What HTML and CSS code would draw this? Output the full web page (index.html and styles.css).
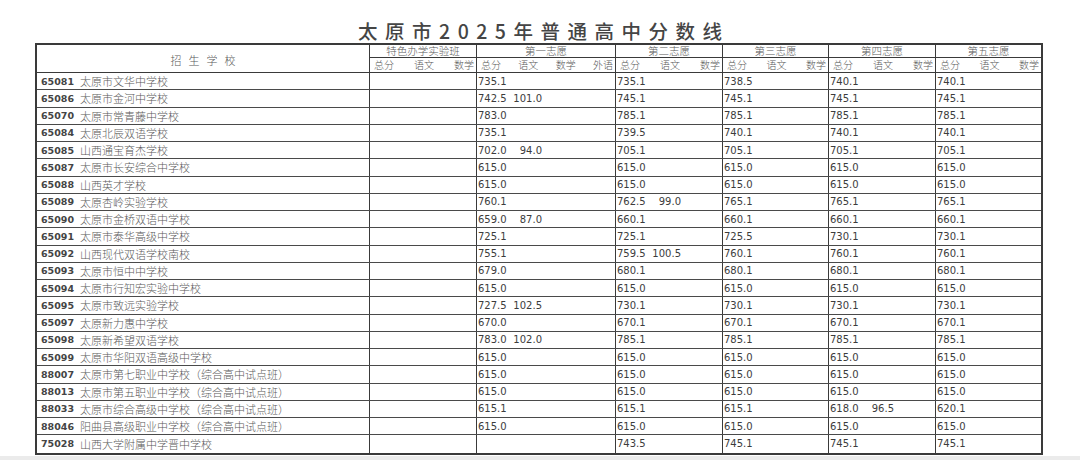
FILE: index.html
```html
<!DOCTYPE html>
<html lang="zh-CN">
<head>
<meta charset="utf-8">
<title>太原市2025年普通高中分数线</title>
<link rel="stylesheet" href="styles.css">
</head>
<body>
<div class="page">
  <h1 class="title">太原市2025年普通高中分数线</h1>
  <div class="sheet">
    <div class="head">
      <div class="hc hschool">招生学校</div>
      <div class="hc hgroup"><div class="gname">特色办学实验班</div><div class="subs"><span>总分</span><span>语文</span><span>数学</span></div></div>
      <div class="hc hgroup"><div class="gname">第一志愿</div><div class="subs"><span>总分</span><span>语文</span><span>数学</span><span>外语</span></div></div>
      <div class="hc hgroup"><div class="gname">第二志愿</div><div class="subs"><span>总分</span><span>语文</span><span>数学</span></div></div>
      <div class="hc hgroup"><div class="gname">第三志愿</div><div class="subs"><span>总分</span><span>语文</span><span>数学</span></div></div>
      <div class="hc hgroup"><div class="gname">第四志愿</div><div class="subs"><span>总分</span><span>语文</span><span>数学</span></div></div>
      <div class="hc hgroup last"><div class="gname">第五志愿</div><div class="subs"><span>总分</span><span>语文</span><span>数学</span></div></div>
    </div>
    <div class="body" id="rows">
      <div class="row"><div class="c school"><span class="code">65081</span><span class="name">太原市文华中学校</span></div><div class="c"></div><div class="c"><span class="v1">735.1</span></div><div class="c"><span class="v1">735.1</span></div><div class="c"><span class="v1">738.5</span></div><div class="c"><span class="v1">740.1</span></div><div class="c"><span class="v1">740.1</span></div></div>
      <div class="row"><div class="c school"><span class="code">65086</span><span class="name">太原市金河中学校</span></div><div class="c"></div><div class="c"><span class="v1">742.5</span><span class="v2">101.0</span></div><div class="c"><span class="v1">745.1</span></div><div class="c"><span class="v1">745.1</span></div><div class="c"><span class="v1">745.1</span></div><div class="c"><span class="v1">745.1</span></div></div>
      <div class="row"><div class="c school"><span class="code">65070</span><span class="name">太原市常青藤中学校</span></div><div class="c"></div><div class="c"><span class="v1">783.0</span></div><div class="c"><span class="v1">785.1</span></div><div class="c"><span class="v1">785.1</span></div><div class="c"><span class="v1">785.1</span></div><div class="c"><span class="v1">785.1</span></div></div>
      <div class="row"><div class="c school"><span class="code">65084</span><span class="name">太原北辰双语学校</span></div><div class="c"></div><div class="c"><span class="v1">735.1</span></div><div class="c"><span class="v1">739.5</span></div><div class="c"><span class="v1">740.1</span></div><div class="c"><span class="v1">740.1</span></div><div class="c"><span class="v1">740.1</span></div></div>
      <div class="row"><div class="c school"><span class="code">65085</span><span class="name">山西通宝育杰学校</span></div><div class="c"></div><div class="c"><span class="v1">702.0</span><span class="v2">94.0</span></div><div class="c"><span class="v1">705.1</span></div><div class="c"><span class="v1">705.1</span></div><div class="c"><span class="v1">705.1</span></div><div class="c"><span class="v1">705.1</span></div></div>
      <div class="row"><div class="c school"><span class="code">65087</span><span class="name">太原市长安综合中学校</span></div><div class="c"></div><div class="c"><span class="v1">615.0</span></div><div class="c"><span class="v1">615.0</span></div><div class="c"><span class="v1">615.0</span></div><div class="c"><span class="v1">615.0</span></div><div class="c"><span class="v1">615.0</span></div></div>
      <div class="row"><div class="c school"><span class="code">65088</span><span class="name">山西英才学校</span></div><div class="c"></div><div class="c"><span class="v1">615.0</span></div><div class="c"><span class="v1">615.0</span></div><div class="c"><span class="v1">615.0</span></div><div class="c"><span class="v1">615.0</span></div><div class="c"><span class="v1">615.0</span></div></div>
      <div class="row"><div class="c school"><span class="code">65089</span><span class="name">太原杏岭实验学校</span></div><div class="c"></div><div class="c"><span class="v1">760.1</span></div><div class="c"><span class="v1">762.5</span><span class="v2">99.0</span></div><div class="c"><span class="v1">765.1</span></div><div class="c"><span class="v1">765.1</span></div><div class="c"><span class="v1">765.1</span></div></div>
      <div class="row"><div class="c school"><span class="code">65090</span><span class="name">太原市金桥双语中学校</span></div><div class="c"></div><div class="c"><span class="v1">659.0</span><span class="v2">87.0</span></div><div class="c"><span class="v1">660.1</span></div><div class="c"><span class="v1">660.1</span></div><div class="c"><span class="v1">660.1</span></div><div class="c"><span class="v1">660.1</span></div></div>
      <div class="row"><div class="c school"><span class="code">65091</span><span class="name">太原市泰华高级中学校</span></div><div class="c"></div><div class="c"><span class="v1">725.1</span></div><div class="c"><span class="v1">725.1</span></div><div class="c"><span class="v1">725.5</span></div><div class="c"><span class="v1">730.1</span></div><div class="c"><span class="v1">730.1</span></div></div>
      <div class="row"><div class="c school"><span class="code">65092</span><span class="name">山西现代双语学校南校</span></div><div class="c"></div><div class="c"><span class="v1">755.1</span></div><div class="c"><span class="v1">759.5</span><span class="v2">100.5</span></div><div class="c"><span class="v1">760.1</span></div><div class="c"><span class="v1">760.1</span></div><div class="c"><span class="v1">760.1</span></div></div>
      <div class="row"><div class="c school"><span class="code">65093</span><span class="name">太原市恒中中学校</span></div><div class="c"></div><div class="c"><span class="v1">679.0</span></div><div class="c"><span class="v1">680.1</span></div><div class="c"><span class="v1">680.1</span></div><div class="c"><span class="v1">680.1</span></div><div class="c"><span class="v1">680.1</span></div></div>
      <div class="row"><div class="c school"><span class="code">65094</span><span class="name">太原市行知宏实验中学校</span></div><div class="c"></div><div class="c"><span class="v1">615.0</span></div><div class="c"><span class="v1">615.0</span></div><div class="c"><span class="v1">615.0</span></div><div class="c"><span class="v1">615.0</span></div><div class="c"><span class="v1">615.0</span></div></div>
      <div class="row"><div class="c school"><span class="code">65095</span><span class="name">太原市致远实验学校</span></div><div class="c"></div><div class="c"><span class="v1">727.5</span><span class="v2">102.5</span></div><div class="c"><span class="v1">730.1</span></div><div class="c"><span class="v1">730.1</span></div><div class="c"><span class="v1">730.1</span></div><div class="c"><span class="v1">730.1</span></div></div>
      <div class="row"><div class="c school"><span class="code">65097</span><span class="name">太原新力惠中学校</span></div><div class="c"></div><div class="c"><span class="v1">670.0</span></div><div class="c"><span class="v1">670.1</span></div><div class="c"><span class="v1">670.1</span></div><div class="c"><span class="v1">670.1</span></div><div class="c"><span class="v1">670.1</span></div></div>
      <div class="row"><div class="c school"><span class="code">65098</span><span class="name">太原新希望双语学校</span></div><div class="c"></div><div class="c"><span class="v1">783.0</span><span class="v2">102.0</span></div><div class="c"><span class="v1">785.1</span></div><div class="c"><span class="v1">785.1</span></div><div class="c"><span class="v1">785.1</span></div><div class="c"><span class="v1">785.1</span></div></div>
      <div class="row"><div class="c school"><span class="code">65099</span><span class="name">太原市华阳双语高级中学校</span></div><div class="c"></div><div class="c"><span class="v1">615.0</span></div><div class="c"><span class="v1">615.0</span></div><div class="c"><span class="v1">615.0</span></div><div class="c"><span class="v1">615.0</span></div><div class="c"><span class="v1">615.0</span></div></div>
      <div class="row"><div class="c school"><span class="code">88007</span><span class="name">太原市第七职业中学校（综合高中试点班）</span></div><div class="c"></div><div class="c"><span class="v1">615.0</span></div><div class="c"><span class="v1">615.0</span></div><div class="c"><span class="v1">615.0</span></div><div class="c"><span class="v1">615.0</span></div><div class="c"><span class="v1">615.0</span></div></div>
      <div class="row"><div class="c school"><span class="code">88013</span><span class="name">太原市第五职业中学校（综合高中试点班）</span></div><div class="c"></div><div class="c"><span class="v1">615.0</span></div><div class="c"><span class="v1">615.0</span></div><div class="c"><span class="v1">615.0</span></div><div class="c"><span class="v1">615.0</span></div><div class="c"><span class="v1">615.0</span></div></div>
      <div class="row"><div class="c school"><span class="code">88033</span><span class="name">太原市综合高级中学校（综合高中试点班）</span></div><div class="c"></div><div class="c"><span class="v1">615.1</span></div><div class="c"><span class="v1">615.1</span></div><div class="c"><span class="v1">615.1</span></div><div class="c"><span class="v1">618.0</span><span class="v2">96.5</span></div><div class="c"><span class="v1">620.1</span></div></div>
      <div class="row"><div class="c school"><span class="code">88046</span><span class="name">阳曲县高级职业中学校（综合高中试点班）</span></div><div class="c"></div><div class="c"><span class="v1">615.0</span></div><div class="c"><span class="v1">615.0</span></div><div class="c"><span class="v1">615.0</span></div><div class="c"><span class="v1">615.0</span></div><div class="c"><span class="v1">615.0</span></div></div>
      <div class="row"><div class="c school"><span class="code">75028</span><span class="name">山西大学附属中学晋中学校</span></div><div class="c"></div><div class="c"></div><div class="c"><span class="v1">743.5</span></div><div class="c"><span class="v1">745.1</span></div><div class="c"><span class="v1">745.1</span></div><div class="c"><span class="v1">745.1</span></div></div>
    </div>
  </div>
  <div class="strip"></div>
</div>
</body>
</html>
```

FILE: styles.css
```css
html, body {
  margin: 0;
  padding: 0;
  background: #ffffff;
}
body {
  width: 1080px;
  height: 460px;
  overflow: hidden;
  font-family: "Noto Sans CJK SC", "DejaVu Sans", sans-serif;
  color: #444;
}
.page {
  width: 1080px;
  height: 460px;
  display: flex;
  flex-direction: column;
}
.title {
  margin: 19px 0 0 0;
  height: 24px;
  line-height: 24px;
  text-align: center;
  font-family: "Noto Sans CJK SC", sans-serif;
  font-weight: 500;
  font-size: 19.5px;
  letter-spacing: 7.5px;
  padding-left: 7.5px;
  color: #454545;
}
.sheet {
  margin-left: 35px;
  width: 1004px;
  border: 2px solid #3a3a3a;
}
.head, .row {
  display: grid;
  grid-template-columns: 333px 107px 139px 107px 106px 107px 105px;
}
.head {
  height: 28px;
  box-sizing: border-box;
  border-bottom: 1px solid #3a3a3a;
}
.hc {
  border-right: 1px solid #3a3a3a;
  box-sizing: border-box;
  font-weight: 300;
  color: #5a5a5a;
}
.hc.last, .row .c:last-child {
  border-right: none;
}
.hschool {
  display: flex;
  align-items: center;
  justify-content: center;
  font-size: 11px;
  letter-spacing: 7px;
  padding-left: 7px;
  padding-top: 2px;
}
.hgroup {
  display: flex;
  flex-direction: column;
}
.gname {
  height: 13px;
  box-sizing: border-box;
  border-bottom: 1px solid #3a3a3a;
  font-size: 10.5px;
  line-height: 12px;
  text-align: center;
}
.subs {
  flex: 1;
  display: flex;
  justify-content: space-between;
  align-items: center;
  padding: 0 2px 0 4px;
  font-size: 10px;
  line-height: 12px;
}
.row {
  height: 17.25px;
  box-sizing: border-box;
  border-bottom: 1px solid #4a4a4a;
}
.row:last-child {
  border-bottom: none;
}
.c {
  border-right: 1px solid #3a3a3a;
  box-sizing: border-box;
  display: flex;
  align-items: center;
  padding-left: 1px;
  font-family: "DejaVu Sans", sans-serif;
  font-size: 10px;
  color: #3c3c3c;
  white-space: nowrap;
  overflow: hidden;
}
.c.school {
  padding-left: 4px;
}
.code {
  display: inline-block;
  width: 39px;
  font-family: "DejaVu Sans", sans-serif;
  font-weight: 700;
  font-size: 9.5px;
  color: #444;
}
.name {
  font-family: "Noto Sans CJK SC", sans-serif;
  font-weight: 300;
  font-size: 11px;
  color: #5a5a5a;
}
.v1 {
  display: inline-block;
  width: 34px;
}
.v2 {
  display: inline-block;
  width: 30px;
  text-align: right;
}
.strip {
  margin-top: 1px;
  height: 5px;
  background: #ebebeb;
}
```
